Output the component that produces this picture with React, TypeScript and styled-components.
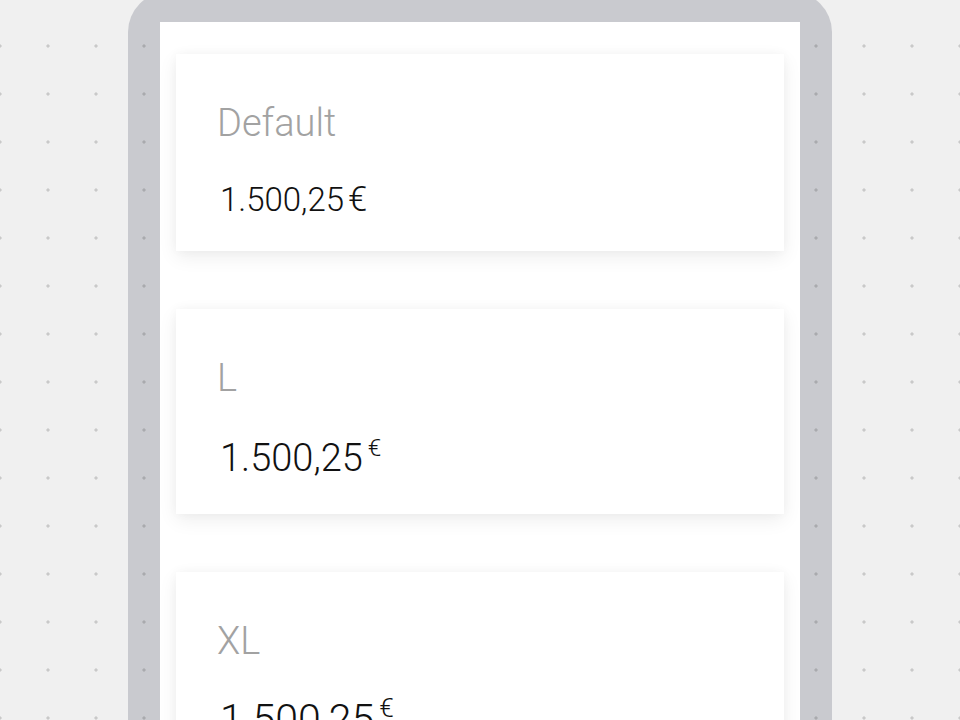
import * as React from "react";
import styled, { createGlobalStyle } from "styled-components";

type Size = "default" | "l" | "xl";

interface Variant {
  label: string;
  size: Size;
}

const variants: Variant[] = [
  { label: "Default", size: "default" },
  { label: "L", size: "l" },
  { label: "XL", size: "xl" },
];

// font size / line height / gap above the price, per size
const priceFont: Record<Size, number> = { default: 33, l: 38, xl: 41 };
const priceLine: Record<Size, number> = { default: 40, l: 50, xl: 50 };
const priceGap: Record<Size, number> = { default: 37, l: 35, xl: 33 };

export default function App() {
  return (
    <>
      <GlobalStyle />
      <Frame>
        <Screen>
          {variants.map((v) => (
            <Card key={v.label}>
              <Label>{v.label}</Label>
              <Price size={v.size}>
                1.500,25
                <Currency $super={v.size !== "default"}>€</Currency>
              </Price>
            </Card>
          ))}
        </Screen>
      </Frame>
    </>
  );
}

const dots = `radial-gradient(circle, rgba(0, 0, 0, 0.16) 1.3px, transparent 1.9px)`;

const GlobalStyle = createGlobalStyle`
  html, body {
    margin: 0;
    height: 100%;
    overflow: hidden;
  }
  body {
    background-color: #f0f0f0;
    background-image: ${dots};
    background-size: 48px 48px;
    background-position: -24px 22px;
    background-attachment: fixed;
    font-family: Roboto, "Liberation Sans", sans-serif;
  }
`;

const Frame = styled.div`
  width: 704px;
  margin: -8px auto 0;
  padding: 30px 32px 0;
  box-sizing: border-box;
  border-radius: 40px 40px 0 0;
  background-color: #c9cacf;
  background-image: ${dots};
  background-size: 48px 48px;
  background-position: -24px 22px;
  background-attachment: fixed;
`;

const Screen = styled.div`
  background: #ffffff;
  padding: 32px 16px;
  display: flex;
  flex-direction: column;
  gap: 58px;
`;

const Card = styled.div`
  background: #ffffff;
  padding: 49px 40px 31px 41px;
  box-shadow: 0 6px 18px rgba(0, 0, 0, 0.07), 0 0 10px rgba(0, 0, 0, 0.03);
`;

const Label = styled.div`
  font-size: 38px;
  line-height: 40px;
  font-weight: 300;
  color: #a2a2a2;
`;

const Price = styled.div<{ size: Size }>`
  margin-top: ${(p) => priceGap[p.size]}px;
  font-size: ${(p) => priceFont[p.size]}px;
  line-height: ${(p) => priceLine[p.size]}px;
  font-weight: 300;
  color: #111111;
  padding-left: 3px;
`;

const Currency = styled.span<{ $super: boolean }>`
  margin-left: ${(p) => (p.$super ? 5 : 4)}px;
  font-size: ${(p) => (p.$super ? "0.64em" : "1.05em")};
  vertical-align: ${(p) => (p.$super ? "0.62em" : "baseline")};
  line-height: 0;
`;
